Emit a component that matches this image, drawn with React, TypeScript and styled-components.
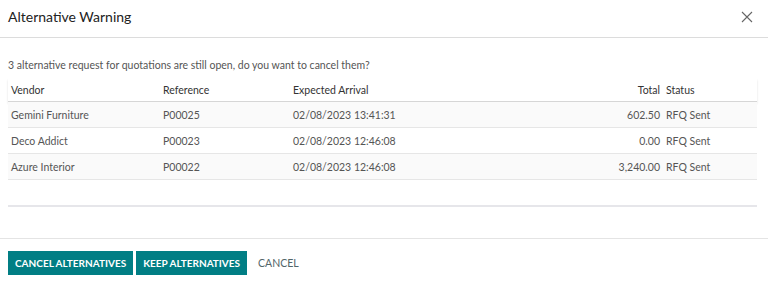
import React from "react";
import styled, { createGlobalStyle } from "styled-components";

const GlobalStyle = createGlobalStyle`
  html, body {
    margin: 0;
    padding: 0;
    background: #fff;
  }
  body {
    font-family: "Segoe UI", Lato, "Open Sans", sans-serif;
    color: #4c4c4c;
  }
`;

const Dialog = styled.div`
  width: 768px;
  height: 285px;
  display: flex;
  flex-direction: column;
  background: #fff;
`;

const Header = styled.header`
  height: 38px;
  box-sizing: border-box;
  border-bottom: 1px solid #dcdcdc;
  display: flex;
  align-items: center;
  justify-content: space-between;
  padding: 0 8px 5px 8px;
`;

const Title = styled.h4`
  margin: 0;
  font-size: 14px;
  font-weight: 400;
  color: #222;
`;

const CloseBtn = styled.button`
  border: 0;
  background: transparent;
  padding: 0;
  width: 16px;
  height: 16px;
  margin-right: 5px;
  margin-top: 2px;
  cursor: pointer;
  display: flex;
  align-items: center;
  justify-content: center;
`;

const Body = styled.div`
  flex: 1;
  padding: 21px 11px 0 8px;
  border-bottom: 1px solid #e4e4e4;
`;

const Message = styled.p`
  margin: 0 0 7px 0;
  font-size: 10.5px;
  color: #555;
`;

const Table = styled.table`
  width: 100%;
  border-collapse: collapse;
  font-size: 10.5px;
`;

const HeadCell = styled.th<{ $right?: boolean; $w?: string }>`
  font-weight: 400;
  color: #333;
  text-align: ${(p) => (p.$right ? "right" : "left")};
  height: 23px;
  padding: 0 3px;
  width: ${(p) => p.$w || "auto"};
  border-bottom: 1px solid #d6d6d6;
`;

const HeadRow = styled.tr`
  box-shadow: 0 2px 2px rgba(0, 0, 0, 0.12);
`;

const Row = styled.tr<{ $striped?: boolean }>`
  background: ${(p) => (p.$striped ? "#fafafa" : "#fff")};
  border-bottom: 1px solid #e6e6e6;
`;

const Cell = styled.td<{ $right?: boolean }>`
  height: 25px;
  padding: 0 3px;
  color: #555;
  text-align: ${(p) => (p.$right ? "right" : "left")};
`;

const Divider = styled.div`
  height: 2px;
  background: #e6e6ea;
  margin-top: 25px;
`;

const Footer = styled.footer`
  height: 46px;
  display: flex;
  align-items: flex-start;
  gap: 3px;
  padding: 12px 8px 0 8px;
  box-sizing: border-box;
`;

const PrimaryBtn = styled.button`
  height: 24px;
  border: 0;
  background: #017e84;
  color: #fff;
  font-family: inherit;
  font-size: 10px;
  font-weight: 700;
  text-transform: uppercase;
  padding: 0 7px;
  cursor: pointer;
`;

const LinkBtn = styled.button`
  height: 24px;
  border: 0;
  background: transparent;
  color: #526569;
  font-family: inherit;
  font-size: 10.5px;
  text-transform: uppercase;
  padding: 0 8px;
  cursor: pointer;
`;

const rows = [
  { vendor: "Gemini Furniture", ref: "P00025", date: "02/08/2023 13:41:31", total: "602.50", status: "RFQ Sent" },
  { vendor: "Deco Addict", ref: "P00023", date: "02/08/2023 12:46:08", total: "0.00", status: "RFQ Sent" },
  { vendor: "Azure Interior", ref: "P00022", date: "02/08/2023 12:46:08", total: "3,240.00", status: "RFQ Sent" },
];

export default function App() {
  return (
    <>
      <GlobalStyle />
      <Dialog>
        <Header>
          <Title>Alternative Warning</Title>
          <CloseBtn aria-label="Close">
            <svg width="12" height="12" viewBox="0 0 12 12">
              <path d="M1 1L11 11M11 1L1 11" stroke="#666" strokeWidth="1.1" />
            </svg>
          </CloseBtn>
        </Header>
        <Body>
          <Message>3 alternative request for quotations are still open, do you want to cancel them?</Message>
          <Table>
            <thead>
              <HeadRow>
                <HeadCell $w="146px">Vendor</HeadCell>
                <HeadCell $w="124px">Reference</HeadCell>
                <HeadCell>Expected Arrival</HeadCell>
                <HeadCell $right $w="80px">Total</HeadCell>
                <HeadCell $w="88px">Status</HeadCell>
              </HeadRow>
            </thead>
            <tbody>
              {rows.map((r, i) => (
                <Row key={r.ref} $striped={i % 2 === 0}>
                  <Cell>{r.vendor}</Cell>
                  <Cell>{r.ref}</Cell>
                  <Cell>{r.date}</Cell>
                  <Cell $right>{r.total}</Cell>
                  <Cell>{r.status}</Cell>
                </Row>
              ))}
            </tbody>
          </Table>
          <Divider />
        </Body>
        <Footer>
          <PrimaryBtn>Cancel Alternatives</PrimaryBtn>
          <PrimaryBtn>Keep Alternatives</PrimaryBtn>
          <LinkBtn>Cancel</LinkBtn>
        </Footer>
      </Dialog>
    </>
  );
}
